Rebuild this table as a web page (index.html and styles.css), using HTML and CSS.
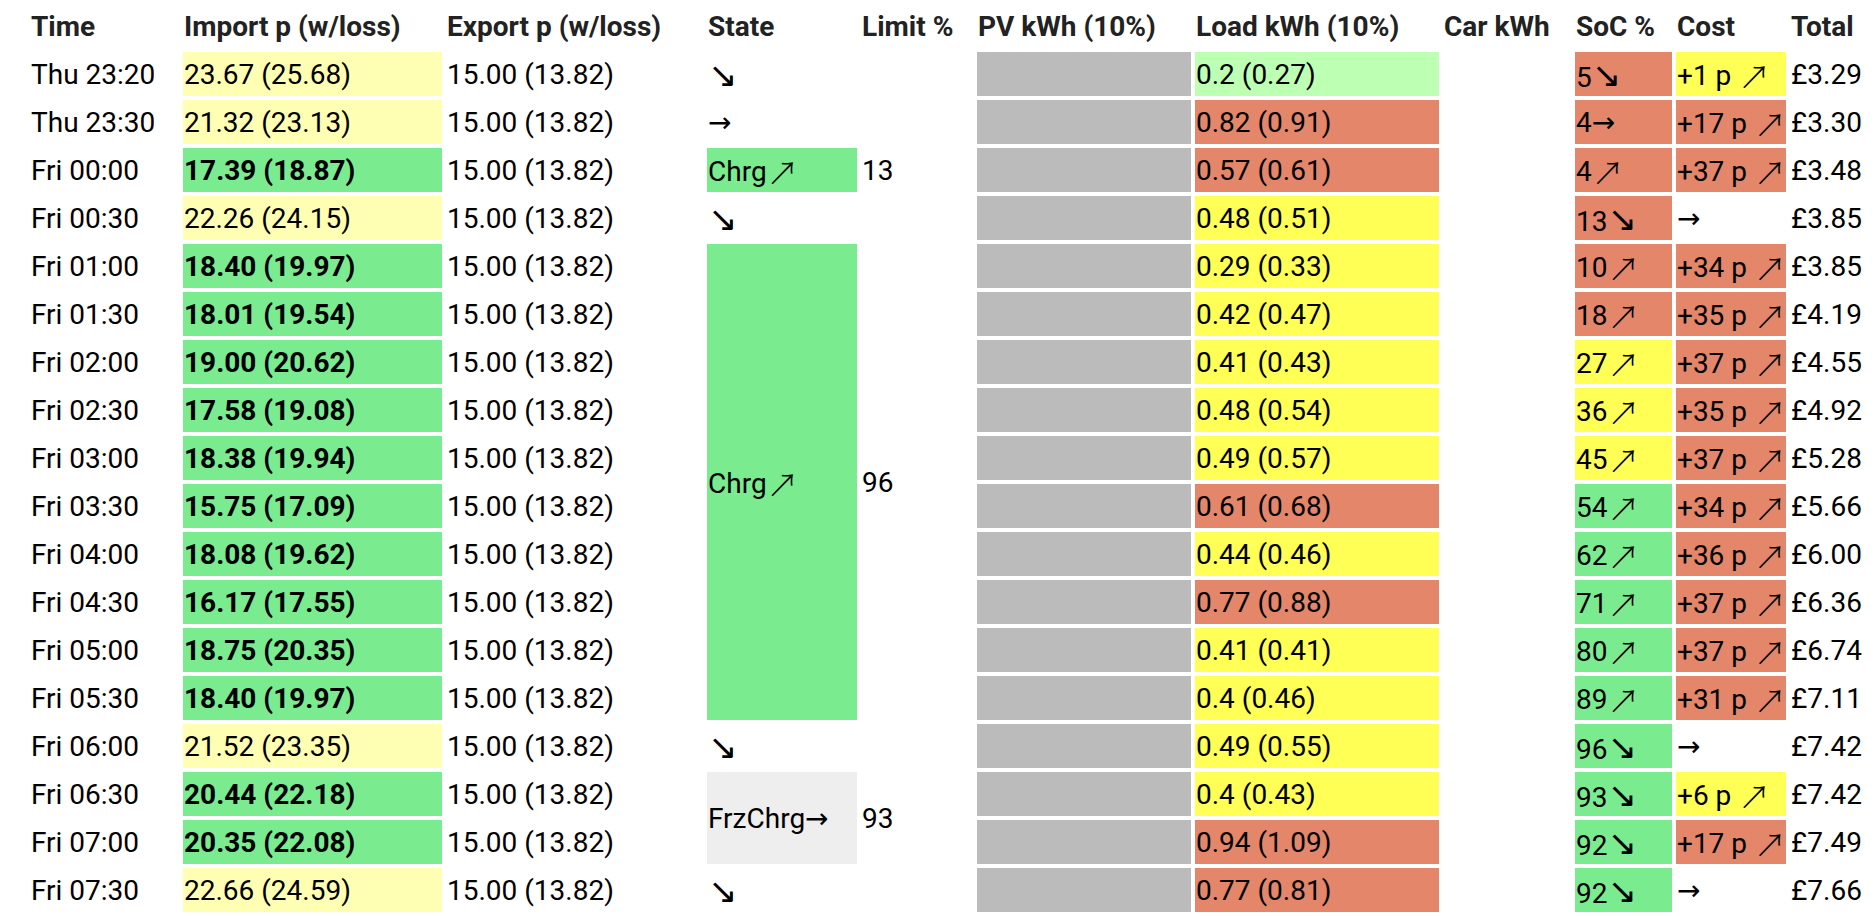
FILE: index.html
```html
<!DOCTYPE html>
<html lang="en">
<head>
<meta charset="utf-8">
<title>Plan</title>
<link rel="stylesheet" href="styles.css">
</head>
<body>
<div class="plan">
  <div class="cell hd">Time</div>
  <div class="cell hd">Import p (w/loss)</div>
  <div class="cell hd">Export p (w/loss)</div>
  <div class="cell hd">State</div>
  <div class="cell hd">Limit %</div>
  <div class="cell hd">PV kWh (10%)</div>
  <div class="cell hd">Load kWh (10%)</div>
  <div class="cell hd">Car kWh</div>
  <div class="cell hd">SoC %</div>
  <div class="cell hd">Cost</div>
  <div class="cell hd">Total</div>

  <div class="cell">Thu 23:20</div>
  <div class="cell ly">23.67 (25.68)</div>
  <div class="cell">15.00 (13.82)</div>
  <div class="cell"><span class="dn">↘</span></div>
  <div class="cell"></div>
  <div class="cell gr"></div>
  <div class="cell lg">0.2 (0.27)</div>
  <div class="cell"></div>
  <div class="cell rd">5<span class="dn">↘</span></div>
  <div class="cell ye">+1 p <span class="up">↗</span></div>
  <div class="cell">£3.29</div>

  <div class="cell">Thu 23:30</div>
  <div class="cell ly">21.32 (23.13)</div>
  <div class="cell">15.00 (13.82)</div>
  <div class="cell"><span class="rt">→</span></div>
  <div class="cell"></div>
  <div class="cell gr"></div>
  <div class="cell rd">0.82 (0.91)</div>
  <div class="cell"></div>
  <div class="cell rd">4<span class="rt">→</span></div>
  <div class="cell rd">+17 p <span class="up">↗</span></div>
  <div class="cell">£3.30</div>

  <div class="cell">Fri 00:00</div>
  <div class="cell gn b">17.39 (18.87)</div>
  <div class="cell">15.00 (13.82)</div>
  <div class="cell gn">Chrg<span class="up">↗</span></div>
  <div class="cell">13</div>
  <div class="cell gr"></div>
  <div class="cell rd">0.57 (0.61)</div>
  <div class="cell"></div>
  <div class="cell rd">4<span class="up">↗</span></div>
  <div class="cell rd">+37 p <span class="up">↗</span></div>
  <div class="cell">£3.48</div>

  <div class="cell">Fri 00:30</div>
  <div class="cell ly">22.26 (24.15)</div>
  <div class="cell">15.00 (13.82)</div>
  <div class="cell"><span class="dn">↘</span></div>
  <div class="cell"></div>
  <div class="cell gr"></div>
  <div class="cell ye">0.48 (0.51)</div>
  <div class="cell"></div>
  <div class="cell rd">13<span class="dn">↘</span></div>
  <div class="cell"><span class="rt">→</span></div>
  <div class="cell">£3.85</div>

  <div class="cell">Fri 01:00</div>
  <div class="cell gn b">18.40 (19.97)</div>
  <div class="cell">15.00 (13.82)</div>
  <div class="cell gn span10">Chrg<span class="up">↗</span></div>
  <div class="cell span10">96</div>
  <div class="cell gr"></div>
  <div class="cell ye">0.29 (0.33)</div>
  <div class="cell"></div>
  <div class="cell rd">10<span class="up">↗</span></div>
  <div class="cell rd">+34 p <span class="up">↗</span></div>
  <div class="cell">£3.85</div>

  <div class="cell">Fri 01:30</div>
  <div class="cell gn b">18.01 (19.54)</div>
  <div class="cell">15.00 (13.82)</div>
  <div class="cell gr"></div>
  <div class="cell ye">0.42 (0.47)</div>
  <div class="cell"></div>
  <div class="cell rd">18<span class="up">↗</span></div>
  <div class="cell rd">+35 p <span class="up">↗</span></div>
  <div class="cell">£4.19</div>

  <div class="cell">Fri 02:00</div>
  <div class="cell gn b">19.00 (20.62)</div>
  <div class="cell">15.00 (13.82)</div>
  <div class="cell gr"></div>
  <div class="cell ye">0.41 (0.43)</div>
  <div class="cell"></div>
  <div class="cell ye">27<span class="up">↗</span></div>
  <div class="cell rd">+37 p <span class="up">↗</span></div>
  <div class="cell">£4.55</div>

  <div class="cell">Fri 02:30</div>
  <div class="cell gn b">17.58 (19.08)</div>
  <div class="cell">15.00 (13.82)</div>
  <div class="cell gr"></div>
  <div class="cell ye">0.48 (0.54)</div>
  <div class="cell"></div>
  <div class="cell ye">36<span class="up">↗</span></div>
  <div class="cell rd">+35 p <span class="up">↗</span></div>
  <div class="cell">£4.92</div>

  <div class="cell">Fri 03:00</div>
  <div class="cell gn b">18.38 (19.94)</div>
  <div class="cell">15.00 (13.82)</div>
  <div class="cell gr"></div>
  <div class="cell ye">0.49 (0.57)</div>
  <div class="cell"></div>
  <div class="cell ye">45<span class="up">↗</span></div>
  <div class="cell rd">+37 p <span class="up">↗</span></div>
  <div class="cell">£5.28</div>

  <div class="cell">Fri 03:30</div>
  <div class="cell gn b">15.75 (17.09)</div>
  <div class="cell">15.00 (13.82)</div>
  <div class="cell gr"></div>
  <div class="cell rd">0.61 (0.68)</div>
  <div class="cell"></div>
  <div class="cell gn">54<span class="up">↗</span></div>
  <div class="cell rd">+34 p <span class="up">↗</span></div>
  <div class="cell">£5.66</div>

  <div class="cell">Fri 04:00</div>
  <div class="cell gn b">18.08 (19.62)</div>
  <div class="cell">15.00 (13.82)</div>
  <div class="cell gr"></div>
  <div class="cell ye">0.44 (0.46)</div>
  <div class="cell"></div>
  <div class="cell gn">62<span class="up">↗</span></div>
  <div class="cell rd">+36 p <span class="up">↗</span></div>
  <div class="cell">£6.00</div>

  <div class="cell">Fri 04:30</div>
  <div class="cell gn b">16.17 (17.55)</div>
  <div class="cell">15.00 (13.82)</div>
  <div class="cell gr"></div>
  <div class="cell rd">0.77 (0.88)</div>
  <div class="cell"></div>
  <div class="cell gn">71<span class="up">↗</span></div>
  <div class="cell rd">+37 p <span class="up">↗</span></div>
  <div class="cell">£6.36</div>

  <div class="cell">Fri 05:00</div>
  <div class="cell gn b">18.75 (20.35)</div>
  <div class="cell">15.00 (13.82)</div>
  <div class="cell gr"></div>
  <div class="cell ye">0.41 (0.41)</div>
  <div class="cell"></div>
  <div class="cell gn">80<span class="up">↗</span></div>
  <div class="cell rd">+37 p <span class="up">↗</span></div>
  <div class="cell">£6.74</div>

  <div class="cell">Fri 05:30</div>
  <div class="cell gn b">18.40 (19.97)</div>
  <div class="cell">15.00 (13.82)</div>
  <div class="cell gr"></div>
  <div class="cell ye">0.4 (0.46)</div>
  <div class="cell"></div>
  <div class="cell gn">89<span class="up">↗</span></div>
  <div class="cell rd">+31 p <span class="up">↗</span></div>
  <div class="cell">£7.11</div>

  <div class="cell">Fri 06:00</div>
  <div class="cell ly">21.52 (23.35)</div>
  <div class="cell">15.00 (13.82)</div>
  <div class="cell"><span class="dn">↘</span></div>
  <div class="cell"></div>
  <div class="cell gr"></div>
  <div class="cell ye">0.49 (0.55)</div>
  <div class="cell"></div>
  <div class="cell gn">96<span class="dn">↘</span></div>
  <div class="cell"><span class="rt">→</span></div>
  <div class="cell">£7.42</div>

  <div class="cell">Fri 06:30</div>
  <div class="cell gn b">20.44 (22.18)</div>
  <div class="cell">15.00 (13.82)</div>
  <div class="cell lgr span2">FrzChrg<span class="rt">→</span></div>
  <div class="cell span2">93</div>
  <div class="cell gr"></div>
  <div class="cell ye">0.4 (0.43)</div>
  <div class="cell"></div>
  <div class="cell gn">93<span class="dn">↘</span></div>
  <div class="cell ye">+6 p <span class="up">↗</span></div>
  <div class="cell">£7.42</div>

  <div class="cell">Fri 07:00</div>
  <div class="cell gn b">20.35 (22.08)</div>
  <div class="cell">15.00 (13.82)</div>
  <div class="cell gr"></div>
  <div class="cell rd">0.94 (1.09)</div>
  <div class="cell"></div>
  <div class="cell gn">92<span class="dn">↘</span></div>
  <div class="cell rd">+17 p <span class="up">↗</span></div>
  <div class="cell">£7.49</div>

  <div class="cell">Fri 07:30</div>
  <div class="cell ly">22.66 (24.59)</div>
  <div class="cell">15.00 (13.82)</div>
  <div class="cell"><span class="dn">↘</span></div>
  <div class="cell"></div>
  <div class="cell gr"></div>
  <div class="cell rd">0.77 (0.81)</div>
  <div class="cell"></div>
  <div class="cell gn">92<span class="dn">↘</span></div>
  <div class="cell"><span class="rt">→</span></div>
  <div class="cell">£7.66</div>
</div>
</body>
</html>
```

FILE: styles.css
```css
html, body {
  margin: 0;
  padding: 0;
  background: #ffffff;
}

body {
  font-family: Roboto, "DejaVu Sans", sans-serif;
  font-size: 28px;
  color: #000000;
}

.plan {
  display: grid;
  grid-template-columns: 149px 259px 257px 150px 112px 214px 244px 128px 97px 110px 72px;
  grid-auto-rows: 44px;
  gap: 4px;
  padding: 4px 0 0 30px;
  width: max-content;
}

.cell {
  display: block;
  padding: 2px 0 0 1px;
  line-height: 42px;
  white-space: pre;
  overflow: visible;
}

.hd {
  font-weight: 700;
  color: #222222;
}

.b { font-weight: 700; }

.up {
  font-family: "Noto Sans CJK SC", sans-serif;
  font-weight: 300;
  font-size: 32px;
  vertical-align: -4px;
}

.dn {
  font-family: "DejaVu Sans", sans-serif;
  font-weight: 400;
  font-size: 35px;
}

.rt {
  font-family: "DejaVu Sans", sans-serif;
  font-weight: 400;
}

.span10 {
  grid-row: span 10;
  line-height: 474px;
}

.span2 {
  grid-row: span 2;
  line-height: 90px;
}

.ly { background: #ffffb3; }
.gn { background: #7beb8f; }
.gr { background: #bbbbbb; }
.lg { background: #bdffb3; }
.rd { background: #e3866a; }
.ye { background: #ffff55; }
.lgr { background: #eeeeee; }
```
